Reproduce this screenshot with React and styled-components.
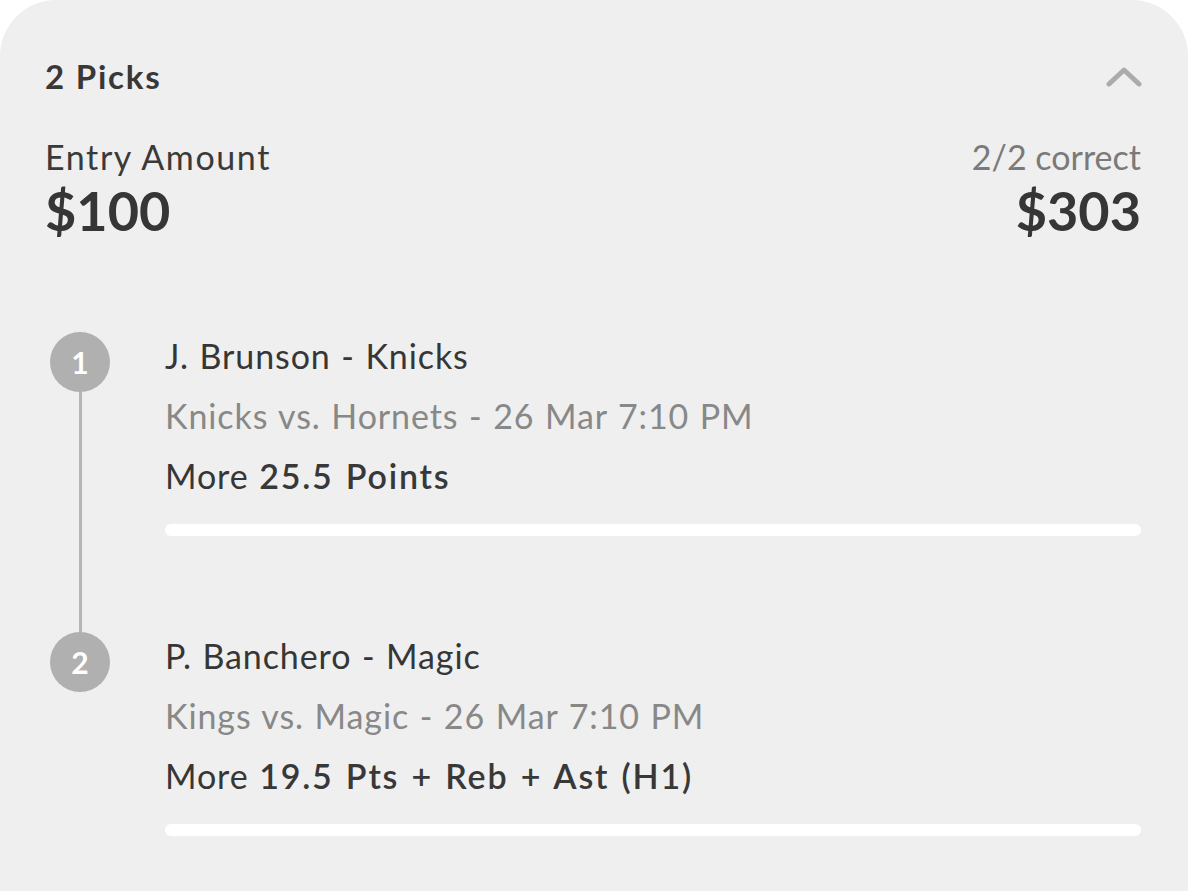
import styled, { createGlobalStyle } from "styled-components"

// pick summary card - 2 leg entry with timeline

const GlobalStyle = createGlobalStyle`
  html, body {
    margin: 0;
    padding: 0;
    background: #ffffff;
  }
  body {
    font-family: Lato, "Open Sans", sans-serif;
    color: #363636;
  }
`

const picks = [
  {
    player: "J. Brunson - Knicks",
    game: "Knicks vs. Hornets - 26 Mar 7:10 PM",
    line: "25.5 Points",
  },
  {
    player: "P. Banchero - Magic",
    game: "Kings vs. Magic - 26 Mar 7:10 PM",
    line: "19.5 Pts + Reb + Ast (H1)",
  },
]

export default function App() {
  return (
    <>
      <GlobalStyle />
      <Card>
        <HeaderRow>
          <Title>2 Picks</Title>
          <Chevron width="36" height="22" viewBox="0 0 36 22">
            <path d="M3 19 L18 5 L33 19" />
          </Chevron>
        </HeaderRow>

        <AmountRow>
          <AmountCol>
            <Label>Entry Amount</Label>
            <Amount>$100</Amount>
          </AmountCol>
          <AmountCol $right>
            <Label $muted>2/2 correct</Label>
            <Amount>$303</Amount>
          </AmountCol>
        </AmountRow>

        <PickList>
          {picks.map((pick, i) => (
            <PickRow key={pick.player}>
              <Rail>
                <StepDot>{i + 1}</StepDot>
                {i < picks.length - 1 && <Connector />}
              </Rail>
              <PickBody>
                <Player>{pick.player}</Player>
                <Game>{pick.game}</Game>
                <Line>
                  More <strong>{pick.line}</strong>
                </Line>
                <Progress />
              </PickBody>
            </PickRow>
          ))}
        </PickList>
      </Card>
    </>
  )
}

const Card = styled.div`
  box-sizing: border-box;
  min-height: 100vh;
  margin-right: 2px;
  background: #efefef;
  border-radius: 56px 56px 0 0;
  padding: 56px 47px 0 45px;
`

const HeaderRow = styled.div`
  display: flex;
  justify-content: space-between;
  align-items: center;
  height: 40px;
`

const Title = styled.div`
  font-size: 33px;
  line-height: 40px;
  font-weight: 700;
  letter-spacing: 1.8px;
  color: #383838;
`

const Chevron = styled.svg`
  margin-right: -1px;
  fill: none;
  stroke: #ababab;
  stroke-width: 5;
  stroke-linecap: round;
  stroke-linejoin: round;
`

const AmountRow = styled.div`
  display: flex;
  justify-content: space-between;
  margin-top: 41px;
`

const AmountCol = styled.div`
  display: flex;
  flex-direction: column;
  gap: 6px;
  align-items: ${(p) => (p.$right ? "flex-end" : "flex-start")};
`

const Label = styled.div`
  font-size: 34px;
  line-height: 40px;
  letter-spacing: ${(p) => (p.$muted ? "0" : "1.6px")};
  color: ${(p) => (p.$muted ? "#7a7a7a" : "#3a3a3a")};
`

const Amount = styled.div`
  font-size: 54px;
  line-height: 56px;
  font-weight: 700;
  color: #363636;
`

const PickList = styled.div`
  margin-top: 87px;
  margin-left: 5px;
`

const PickRow = styled.div`
  display: grid;
  grid-template-columns: 60px 1fr;
  column-gap: 55px;
`

const Rail = styled.div`
  display: flex;
  flex-direction: column;
  align-items: center;
  padding-top: 6px;
`

const StepDot = styled.div`
  width: 60px;
  height: 60px;
  border-radius: 50%;
  background: #b0b0b0;
  color: #ffffff;
  font-size: 30px;
  font-weight: 700;
  display: flex;
  align-items: center;
  justify-content: center;
  flex-shrink: 0;
`

const Connector = styled.div`
  flex: 1;
  width: 3px;
  background: #b5b5b5;
  margin-bottom: -6px;
`

const PickBody = styled.div`
  padding-bottom: 90px;
`

const Player = styled.div`
  font-size: 34px;
  line-height: 60px;
  letter-spacing: 0.9px;
  word-spacing: 1px;
  color: #363636;
`

const Game = styled(Player)`
  color: #888888;
`

const Line = styled(Player)`
  strong {
    font-weight: 600;
    letter-spacing: 1.8px;
    word-spacing: 2px;
    color: #383838;
  }
`

const Progress = styled.div`
  margin-top: 18px;
  height: 12px;
  border-radius: 6px;
  background: #ffffff;
`
